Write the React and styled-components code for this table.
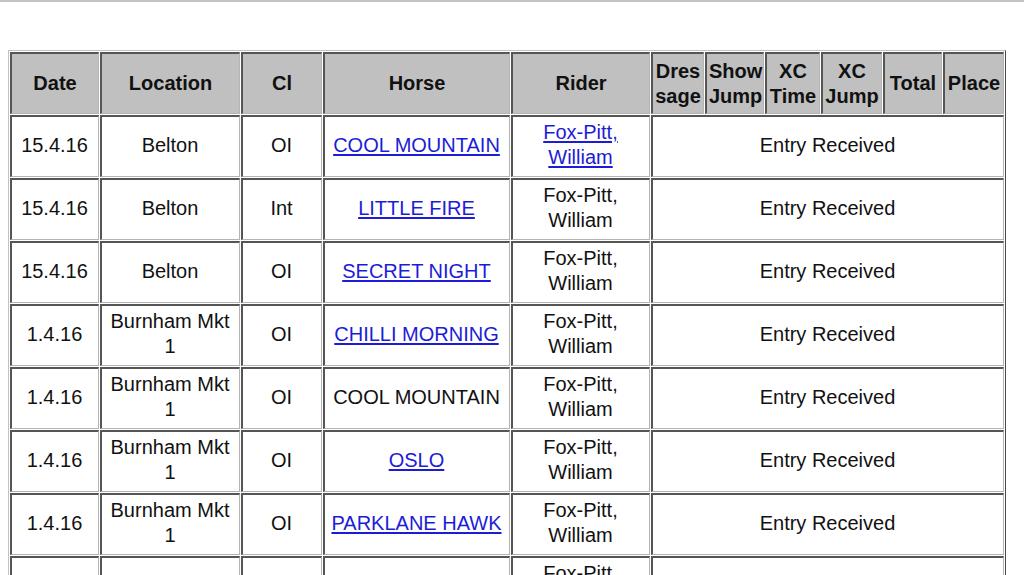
import React from 'react';
import styled, { createGlobalStyle } from 'styled-components';

const GlobalStyle = createGlobalStyle`
  html, body {
    margin: 0;
    padding: 0;
    background: #ffffff;
  }
  body {
    font-family: 'Liberation Sans', Arial, sans-serif;
    color: #111;
    overflow: hidden;
  }
`;

const Page = styled.div`
  width: 1024px;
  height: 575px;
  overflow: hidden;
`;

const TopRule = styled.div`
  height: 2px;
  background: #c4c4c4;
  margin-bottom: 48px;
`;

const Table = styled.table`
  margin-left: 8px;
  table-layout: fixed;
  width: 998px;
  border-collapse: separate;
  border-spacing: 1px;
  border: 1px solid;
  border-color: #c2c2c2 #4a4a4a #4a4a4a #c2c2c2;
  font-size: 20px;
  line-height: 25px;
`;

const cellBorder = `
  border-style: solid;
  border-width: 2px 1px 1px 2px;
  border-color: #555555 #b4b4b4 #b4b4b4 #555555;
  text-align: center;
  vertical-align: middle;
`;

const Th = styled.th`
  ${cellBorder}
  padding: 1px 2px;
  height: 62px;
  box-sizing: border-box;
  background: #c0c0c0;
  font-weight: bold;
  color: #111;
`;

const Td = styled.td`
  ${cellBorder}
  padding: 0 2px 3px 1px;
  height: 62px;
  box-sizing: border-box;
  background: #ffffff;
  font-weight: normal;
`;

const Link = styled.a`
  color: #1c1cd8;
  text-decoration: underline;
  text-underline-offset: 2px;
`;

const cols = [89, 140, 81, 187, 139, 53, 59, 55, 61, 59, 61];

const headers = [
  'Date',
  'Location',
  'Cl',
  'Horse',
  'Rider',
  ['Dres', 'sage'],
  ['Show', 'Jump'],
  ['XC', 'Time'],
  ['XC', 'Jump'],
  'Total',
  'Place',
];

const rows = [
  { date: '15.4.16', loc: 'Belton', cl: 'OI', horse: 'COOL MOUNTAIN', horseLink: true, riderLink: true },
  { date: '15.4.16', loc: 'Belton', cl: 'Int', horse: 'LITTLE FIRE', horseLink: true },
  { date: '15.4.16', loc: 'Belton', cl: 'OI', horse: 'SECRET NIGHT', horseLink: true },
  { date: '1.4.16', loc: 'Burnham Mkt 1', cl: 'OI', horse: 'CHILLI MORNING', horseLink: true },
  { date: '1.4.16', loc: 'Burnham Mkt 1', cl: 'OI', horse: 'COOL MOUNTAIN' },
  { date: '1.4.16', loc: 'Burnham Mkt 1', cl: 'OI', horse: 'OSLO', horseLink: true },
  { date: '1.4.16', loc: 'Burnham Mkt 1', cl: 'OI', horse: 'PARKLANE HAWK', horseLink: true },
  { date: '26.3.16', loc: 'Oasby', cl: 'OI', horse: 'LITTLE FIRE', horseLink: true },
];

const App = () => (
  <Page>
    <GlobalStyle />
    <TopRule />
    <Table>
      <colgroup>
        {cols.map((w, i) => (
          <col key={i} style={{ width: w }} />
        ))}
      </colgroup>
      <thead>
        <tr>
          {headers.map((h, i) => (
            <Th key={i}>
              {Array.isArray(h) ? (
                <>
                  {h[0]}
                  <br />
                  {h[1]}
                </>
              ) : (
                h
              )}
            </Th>
          ))}
        </tr>
      </thead>
      <tbody>
        {rows.map((r, i) => (
          <tr key={i}>
            <Td>{r.date}</Td>
            <Td>{r.loc}</Td>
            <Td>{r.cl}</Td>
            <Td>{r.horseLink ? <Link href="#">{r.horse}</Link> : r.horse}</Td>
            <Td>
              {r.riderLink ? (
                <Link href="#">Fox-Pitt, William</Link>
              ) : (
                'Fox-Pitt, William'
              )}
            </Td>
            <Td colSpan={6}>Entry Received</Td>
          </tr>
        ))}
      </tbody>
    </Table>
  </Page>
);

export default App;
